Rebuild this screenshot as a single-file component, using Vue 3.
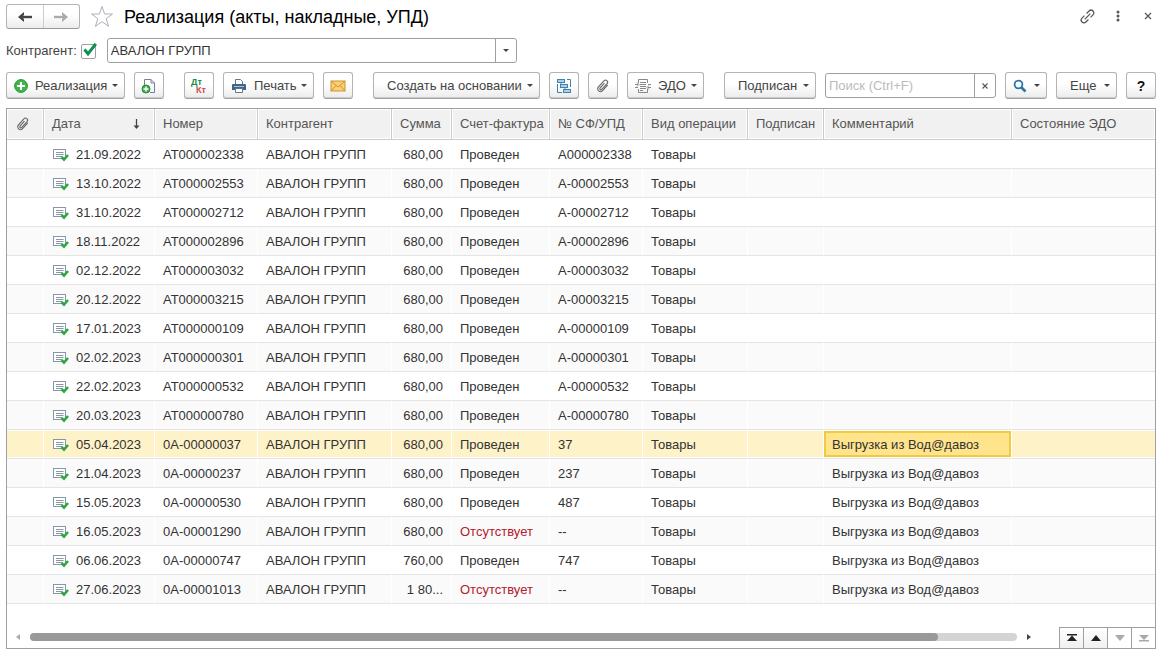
<script setup>
import { ref } from 'vue'

const partner = ref('АВАЛОН ГРУПП')
const filterOn = ref(true)
const search = ref('')
const selected = ref(10)

const source = [
  ['21.09.2022', 'АТ000002338', '680,00', 'Проведен', 'А000002338', ''],
  ['13.10.2022', 'АТ000002553', '680,00', 'Проведен', 'А-00002553', ''],
  ['31.10.2022', 'АТ000002712', '680,00', 'Проведен', 'А-00002712', ''],
  ['18.11.2022', 'АТ000002896', '680,00', 'Проведен', 'А-00002896', ''],
  ['02.12.2022', 'АТ000003032', '680,00', 'Проведен', 'А-00003032', ''],
  ['20.12.2022', 'АТ000003215', '680,00', 'Проведен', 'А-00003215', ''],
  ['17.01.2023', 'АТ000000109', '680,00', 'Проведен', 'А-00000109', ''],
  ['02.02.2023', 'АТ000000301', '680,00', 'Проведен', 'А-00000301', ''],
  ['22.02.2023', 'АТ000000532', '680,00', 'Проведен', 'А-00000532', ''],
  ['20.03.2023', 'АТ000000780', '680,00', 'Проведен', 'А-00000780', ''],
  ['05.04.2023', '0А-00000037', '680,00', 'Проведен', '37', 'Выгрузка из Вод@давоз'],
  ['21.04.2023', '0А-00000237', '680,00', 'Проведен', '237', 'Выгрузка из Вод@давоз'],
  ['15.05.2023', '0А-00000530', '680,00', 'Проведен', '487', 'Выгрузка из Вод@давоз'],
  ['16.05.2023', '0А-00001290', '680,00', 'Отсутствует', '--', 'Выгрузка из Вод@давоз'],
  ['06.06.2023', '0А-00000747', '760,00', 'Проведен', '747', 'Выгрузка из Вод@давоз'],
  ['27.06.2023', '0А-00001013', '1 80...', 'Отсутствует', '--', 'Выгрузка из Вод@давоз'],
]
const rows = source.map(([date, number, sum, invoice, upd, comment]) => ({
  date, number, sum, invoice, upd, comment,
}))

const clipPath = 'M2.8 -4V3.7A2.8 2.8 0 0 1 -2.8 3.7V-4.5A2.1 2.1 0 0 1 1.4 -4.5V3.4A1.1 1.1 0 0 1 -0.8 3.4V-3'
</script>

<template>
  <main class="page">
    <header class="titlebar">
      <div class="nav">
        <button type="button" aria-label="Назад">
          <svg width="16" height="12" viewBox="0 0 16 12"><path d="M15 6H5" stroke="#444" stroke-width="2.400" /><path d="M1 6L7 1V4L5 6L7 8V11Z" fill="#444" /></svg>
        </button>
        <button type="button" aria-label="Вперед">
          <svg width="16" height="12" viewBox="0 0 16 12"><path d="M1 6H11" stroke="#aaa" stroke-width="2.400" /><path d="M15 6L9 1V4L11 6L9 8V11Z" fill="#aaa" /></svg>
        </button>
      </div>
      <button type="button" class="plain star" aria-label="В избранное">
        <svg width="24" height="23" viewBox="0 0 24 23"><path d="M12 1.500L14.600 9H22.500L16.200 13.700L18.600 21.300L12 16.700L5.400 21.300L7.800 13.700L1.500 9H9.400Z" fill="#fff" stroke="#aab0b8" /></svg>
      </button>
      <h1>Реализация (акты, накладные, УПД)</h1>
      <div class="window-tools">
        <button type="button" class="plain" aria-label="Ссылка">
          <svg width="18" height="18" viewBox="0 0 18 18" fill="none" stroke="#555" stroke-width="1.200"><g transform="translate(9.500 8.500) rotate(45)"><path d="M-2.800 -1.500V-5A2.800 2.800 0 0 1 2.800 -5V-1.500M-2.800 1.500V5A2.800 2.800 0 0 0 2.800 5V1.500M0 -4V4" /></g></svg>
        </button>
        <button type="button" class="plain" aria-label="Меню">
          <svg width="18" height="18" viewBox="0 0 18 18" fill="#555"><circle cx="10" cy="4" r="1.500" /><circle cx="10" cy="8" r="1.500" /><circle cx="10" cy="12" r="1.500" /></svg>
        </button>
        <button type="button" class="plain" aria-label="Закрыть">
          <svg width="18" height="18" viewBox="0 0 18 18"><path d="M7 5L13 11M13 5L7 11" stroke="#555" stroke-width="1.200" /></svg>
        </button>
      </div>
    </header>

    <div class="filter">
      <label for="use-partner">Контрагент:</label>
      <span class="check">
        <input id="use-partner" v-model="filterOn" type="checkbox">
        <svg v-if="filterOn" width="16" height="16" viewBox="0 0 16 16"><path d="M3.500 6.500L7 10.800L14.800 0.800" fill="none" stroke="#0b9150" stroke-width="3" /></svg>
      </span>
      <div class="combo">
        <input v-model="partner" type="text" aria-label="Контрагент">
        <button type="button" aria-label="Выбрать"><i class="caret"></i></button>
      </div>
    </div>

    <div class="toolbar">
      <button type="button" class="btn w-new">
        <svg width="14" height="14" viewBox="0 0 14 14"><circle cx="7" cy="7" r="6.400" fill="#3fb549" stroke="#259536" /><path d="M7 3V11M3 7H11" stroke="#fff" stroke-width="2" /></svg>
        <span>Реализация</span><i class="caret"></i>
      </button>
      <button type="button" class="btn icon" aria-label="Скопировать">
        <svg width="16" height="16" viewBox="0 0 16 16"><path d="M3.500 7V1.500H10L13.500 5V14.500H9M10 1.500V5H13.500" fill="none" stroke="#71839a" /><circle cx="5" cy="11" r="4" fill="#3dae49" stroke="#258b35" /><path d="M5 8.500V13.500M2.500 11H7.500" stroke="#fff" stroke-width="1.500" /></svg>
      </button>
      <button type="button" class="btn icon group" aria-label="Проводки">
        <svg class="dtkt" width="18" height="18" viewBox="0 0 18 18"><text x="1" y="8" fill="#168a4b">Дт</text><text x="6" y="16" fill="#d04a52">Кт</text></svg>
      </button>
      <button type="button" class="btn w-print">
        <svg width="16" height="16" viewBox="0 0 16 16"><path d="M4.500 7V1.500H9.500L11.500 3.500V7" fill="#fff" stroke="#61758c" /><path d="M2 6H14Q15 6 15 7V12H1V7Q1 6 2 6Z" fill="#3e6688" /><path d="M3 8.500H13" stroke="#a9c2d7" /><path d="M4.500 10.500H11.500V14.500H4.500Z" fill="#fff" stroke="#61758c" /></svg>
        <span>Печать</span><i class="caret"></i>
      </button>
      <button type="button" class="btn icon" aria-label="Отправить по почте">
        <svg width="16" height="12" viewBox="0 0 16 12"><rect x="1" y="1" width="14" height="10" fill="#fbcf75" stroke="#cf922c" /><path d="M1 1L8 7L15 1M1 11L6 5.500M15 11L10 5.500" fill="none" stroke="#cf922c" /></svg>
      </button>
      <button type="button" class="btn w-base group"><span>Создать на основании</span><i class="caret"></i></button>
      <button type="button" class="btn icon" aria-label="Структура подчиненности">
        <svg width="16" height="16" viewBox="0 0 16 16" fill="#a9d0ee" stroke="#4382b0"><path d="M1.500 6V14.500H6M11 1.500H14.500V9M5 5V8H7M9 9.500V11" fill="none" /><rect x="1.500" y="1.500" width="7" height="3" /><rect x="4.500" y="6.500" width="7" height="3" /><rect x="7.500" y="11.500" width="7" height="3" /></svg>
      </button>
      <button type="button" class="btn icon" aria-label="Файлы">
        <svg width="16" height="16" viewBox="0 0 16 16"><g transform="translate(8 8) rotate(42)"><path :d="clipPath" fill="none" stroke="#666" stroke-width="1.100" /></g></svg>
      </button>
      <button type="button" class="btn w-edo">
        <svg width="16" height="16" viewBox="0 0 16 16" fill="none" stroke="#888"><path d="M3.500 5V1.500H12.500V5M3.500 11V14.500H12.500V11M5 4.500H11M5 6.500H11M5 8.500H11M5 10.500H11M5 12.500H8M0 6.500H3M13 6.500H16M0 9.500H3M13 9.500H16" /><path d="M2 4.500L4 6.500L2 8.500M14 7.500L12 9.500L14 11.500" /></svg>
        <span>ЭДО</span><i class="caret"></i>
      </button>
      <button type="button" class="btn w-signed group"><span>Подписан</span><i class="caret"></i></button>
      <div class="combo search">
        <input v-model="search" type="text" placeholder="Поиск (Ctrl+F)" aria-label="Поиск">
        <button type="button" aria-label="Очистить">
          <svg width="8" height="8" viewBox="0 0 8 8"><path d="M1.500 1.500L6.500 6.500M6.500 1.500L1.500 6.500" stroke="#555" stroke-width="1.100" /></svg>
        </button>
      </div>
      <button type="button" class="btn w-find" aria-label="Найти">
        <svg width="14" height="14" viewBox="0 0 14 14" fill="none" stroke="#2e75a8"><circle cx="5.500" cy="5.500" r="3.900" stroke-width="1.800" /><path d="M8.500 8.500L12.500 12.500" stroke-width="2.600" /></svg>
        <i class="caret"></i>
      </button>
      <button type="button" class="btn w-more"><span>Еще</span><i class="caret"></i></button>
      <button type="button" class="btn icon help">?</button>
    </div>

    <section class="list">
      <table>
        <colgroup>
          <col class="c-clip"><col class="c-date"><col class="c-num"><col class="c-partner"><col class="c-sum"><col class="c-inv"><col class="c-upd"><col class="c-op"><col class="c-sign"><col class="c-note"><col>
        </colgroup>
        <thead>
          <tr>
            <th aria-label="Файлы">
              <svg width="16" height="16" viewBox="0 0 16 16"><g transform="translate(8 8) rotate(42)"><path :d="clipPath" fill="none" stroke="#666" stroke-width="1.100" /></g></svg>
            </th>
            <th>
              <div class="sorted">Дата
                <svg width="9" height="12" viewBox="0 0 9 12"><path d="M4.500 1V9" stroke="#444" stroke-width="1.300" /><path d="M1.500 7.500H7.500L4.500 11Z" fill="#444" /></svg>
              </div>
            </th>
            <th>Номер</th>
            <th>Контрагент</th>
            <th>Сумма</th>
            <th>Счет-фактура</th>
            <th>№ СФ/УПД</th>
            <th>Вид операции</th>
            <th>Подписан</th>
            <th>Комментарий</th>
            <th>Состояние ЭДО</th>
          </tr>
        </thead>
        <tbody>
          <tr v-for="(row, i) in rows" :key="row.number" :class="{ selected: i === selected }" @click="selected = i">
            <td></td>
            <td>
              <div class="date">
                <svg width="16" height="14" viewBox="0 0 16 14"><rect x="0.500" y="1.500" width="12" height="9" fill="#fff" stroke="#8796a8" /><path d="M3 4.500H10.500M3 6.500H10.500M3 8.500H9" stroke="#8796a8" /><path d="M8.500 9L11 11.500L15 7" fill="none" stroke="#2fa640" stroke-width="2.600" /></svg>
                {{ row.date }}
              </div>
            </td>
            <td>{{ row.number }}</td>
            <td>АВАЛОН ГРУПП</td>
            <td class="sum">{{ row.sum }}</td>
            <td :class="{ missing: row.invoice === 'Отсутствует' }">{{ row.invoice }}</td>
            <td>{{ row.upd }}</td>
            <td>Товары</td>
            <td></td>
            <td class="note">{{ row.comment }}</td>
            <td></td>
          </tr>
        </tbody>
      </table>

      <footer class="scroll">
        <div class="hbar">
          <svg width="6" height="8" viewBox="0 0 6 8"><path d="M5 1V7L1 4Z" fill="#aaa" /></svg>
          <div class="track"><div class="thumb"></div></div>
          <svg width="6" height="8" viewBox="0 0 6 8"><path d="M1 1V7L5 4Z" fill="#444" /></svg>
        </div>
        <div class="pager">
          <button type="button" aria-label="В начало"><svg width="12" height="8" viewBox="0 0 12 8" fill="#222"><path d="M1 0H11V1.500H1ZM6 1.500L11 7H1Z" /></svg></button>
          <button type="button" aria-label="Вверх"><svg width="12" height="8" viewBox="0 0 12 8" fill="#222"><path d="M6 1L11 7H1Z" /></svg></button>
          <button type="button" aria-label="Вниз" disabled><svg width="12" height="8" viewBox="0 0 12 8" fill="#aaa"><path d="M6 7L11 1H1Z" /></svg></button>
          <button type="button" aria-label="В конец" disabled><svg width="12" height="8" viewBox="0 0 12 8" fill="#aaa"><path d="M6 6L11 1H1ZM1 6H11V7.500H1Z" /></svg></button>
        </div>
      </footer>
    </section>
  </main>
</template>

<style>
body {
  background: #fff;
}
</style>

<style scoped>
.page,
.page * {
  box-sizing: border-box;
}
.page {
  display: flex;
  flex-direction: column;
  min-height: 100vh;
  padding: 4px 6px 1px;
  font: 13px/16px "Liberation Sans", Arial, sans-serif;
  color: #333;
}
button,
input {
  font: inherit;
  color: inherit;
  margin: 0;
}
button {
  padding: 0;
}
svg {
  display: block;
  flex: none;
}
.titlebar {
  display: flex;
  align-items: center;
  height: 25px;
}
.nav {
  display: flex;
  width: 74px;
  height: 25px;
  border: 1px solid #b4b4b4;
  border-bottom-color: #999;
  border-radius: 3px;
  background: linear-gradient(#fff 40%, #ececec);
}
.nav button {
  flex: 1;
  display: grid;
  place-items: center;
  border: 0;
  background: none;
}
.nav button + button {
  border-left: 1px solid #ccc;
}
.plain {
  border: 0;
  background: none;
  display: grid;
  place-items: center;
}
.star {
  margin: 0 10px;
}
h1 {
  margin: 0;
  font-size: 18px;
  line-height: 24px;
  font-weight: 400;
  color: #000;
}
.window-tools {
  display: flex;
  gap: 12px;
  margin-left: auto;
}
.filter {
  display: flex;
  align-items: center;
  margin-top: 9px;
  color: #444;
}
.check {
  display: grid;
  width: 16px;
  height: 16px;
  margin: 0 10px 0 4px;
}
.check input,
.check svg {
  grid-area: 1 / 1;
}
.check input {
  appearance: none;
  width: 15px;
  height: 15px;
  border: 1px solid #a0a0a0;
  border-radius: 2px;
  background: #fff;
  align-self: end;
}
.check svg {
  pointer-events: none;
}
.combo {
  display: flex;
  width: 410px;
  height: 25px;
  border: 1px solid #a0a0a0;
  border-radius: 3px;
  background: #fff;
  overflow: hidden;
}
.combo input {
  flex: 1;
  min-width: 0;
  border: 0;
  padding: 0 3px;
  background: none;
  color: #333;
  outline: none;
}
.combo input::placeholder {
  color: #bbb;
  opacity: 1;
}
.combo button {
  width: 21px;
  border: 0;
  border-left: 1px solid #a0a0a0;
  background: none;
  display: grid;
  place-items: center;
}
.caret {
  width: 0;
  height: 0;
  border: 3px solid transparent;
  border-top-color: #444;
  border-bottom: 0;
}
.toolbar {
  display: flex;
  align-items: center;
  gap: 9px;
  margin-top: 9px;
}
.toolbar .search {
  flex: 1;
  width: auto;
}
.btn {
  flex: none;
  display: flex;
  align-items: center;
  height: 27px;
  padding: 0 6px 0 7px;
  border: 1px solid #b4b4b4;
  border-bottom-color: #a0a0a0;
  border-radius: 3px;
  box-shadow: inset 0 -1px #ccc;
  background: linear-gradient(#fff 45%, #ebebeb);
  color: #444;
  white-space: nowrap;
}
.btn span {
  margin-left: 8px;
}
.btn .caret {
  margin-left: auto;
}
.btn svg + span {
  margin-left: 7px;
}
.group {
  margin-left: 11px;
}
.icon {
  width: 30px;
  padding: 0;
  justify-content: center;
}
.dtkt text {
  font-size: 9px;
  font-weight: 700;
}
.w-new { width: 119px; }
.w-print { width: 91px; }
.w-base { width: 167px; padding-left: 5px; }
.w-edo { width: 77px; }
.w-signed { width: 92px; padding-left: 5px; }
.w-find { width: 42px; }
.w-more { width: 61px; padding-left: 5px; }
.help {
  font-size: 14px;
  font-weight: 700;
  color: #111;
}
.list {
  flex: 1;
  display: flex;
  flex-direction: column;
  margin-top: 9px;
  border: 1px solid #a0a0a0;
}
table {
  width: 100%;
  table-layout: fixed;
  border-collapse: separate;
  border-spacing: 0;
}
.c-clip { width: 37px; }
.c-date { width: 111px; }
.c-num { width: 103px; }
.c-partner { width: 134px; }
.c-sum { width: 60px; }
.c-inv { width: 98px; }
.c-upd { width: 93px; }
.c-op { width: 105px; }
.c-sign { width: 76px; }
.c-note { width: 188px; }
th,
td {
  padding: 0 0 0 8px;
  text-align: left;
  font-weight: 400;
  white-space: nowrap;
}
th {
  height: 31px;
  background: #f1f1f1;
  border-right: 1px solid #ccc;
  border-bottom: 1px solid #ccc;
  box-shadow: inset 0 0 0 1px #fff;
  color: #555;
}
th:last-child,
td:last-child {
  border-right: 0;
}
.sorted {
  display: flex;
  align-items: center;
  justify-content: space-between;
  padding-right: 13px;
}
td {
  height: 29px;
  padding-top: 2px;
  border-right: 1px solid #fff;
  border-bottom: 1px solid #e4e4e4;
}
tbody tr:nth-child(even) td {
  background: #fafafa;
}
.date {
  display: flex;
  align-items: center;
  gap: 7px;
  padding-left: 1px;
}
td.sum {
  padding-left: 0;
  padding-right: 8px;
  text-align: right;
}
.missing {
  color: #b3202c;
}
tbody tr.selected td {
  background: #fef2c8;
  box-shadow: inset 0 1px #fff, inset 0 -1px #fff;
}
tbody tr.selected td.note {
  background: #ffe48c;
  box-shadow: inset 0 1px #fff, inset 0 -1px #fff, inset 0 3px #efca43, inset 0 -3px #efca43, inset 2px 0 #efca43, inset -2px 0 #efca43;
}
.scroll {
  display: flex;
  align-items: flex-end;
  margin-top: auto;
}
.hbar {
  flex: 1;
  display: flex;
  align-items: center;
  gap: 9px;
  padding-left: 8px;
  height: 22px;
}
.track {
  flex: 1;
  height: 8px;
  border-radius: 4px;
  background: #d4d4d4;
}
.thumb {
  width: 92%;
  height: 8px;
  border-radius: 4px;
  background: #999;
}
.pager {
  display: flex;
  margin-left: 27px;
  border-top: 1px solid #a0a0a0;
}
.pager button {
  width: 24px;
  height: 20px;
  display: grid;
  place-items: center;
  border: 0;
  border-left: 1px solid #a0a0a0;
  background: linear-gradient(#fff, #f0f0f0);
}
.pager button:disabled {
  background: #fff;
}
</style>
